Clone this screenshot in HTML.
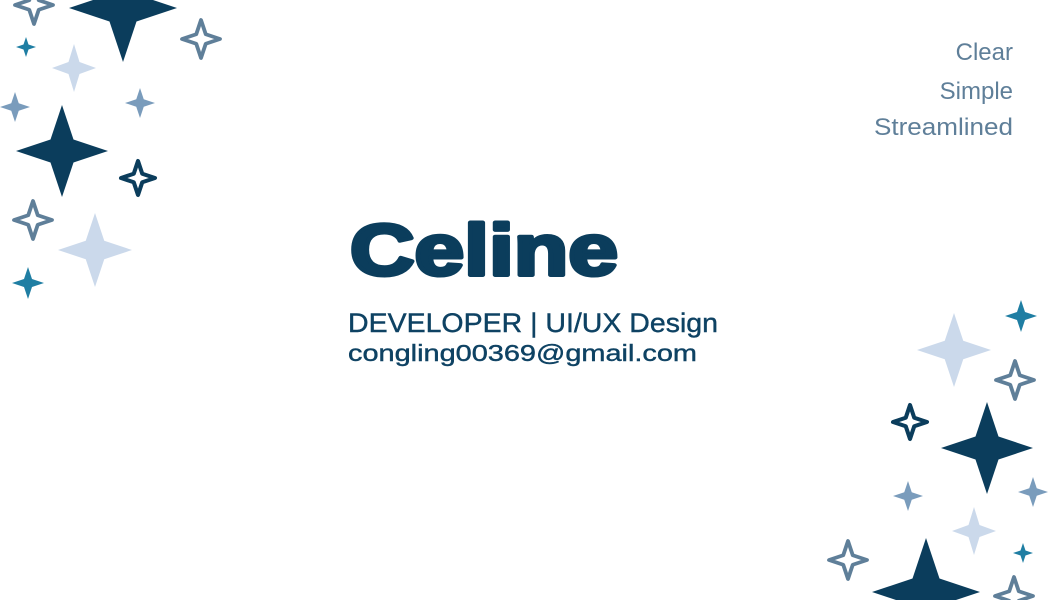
<!DOCTYPE html>
<html><head><meta charset="utf-8"><style>
html,body{margin:0;padding:0;background:#fff;width:1050px;height:600px;overflow:hidden}
svg{display:block;overflow:hidden}
</style></head><body>
<svg width="1050" height="600" viewBox="0 0 1050 600" xmlns="http://www.w3.org/2000/svg">
<defs>
<path id="s" d="M0,-1 L0.25,-0.25 L1,0 L0.25,0.25 L0,1 L-0.25,0.25 L-1,0 L-0.25,-0.25Z"/>
</defs>
<g>
<use href="#s" transform="translate(34,5) scale(19)" fill="none" stroke="#5f7f99" stroke-width="0.2" stroke-linejoin="round"/>
<use href="#s" transform="translate(123,8) scale(54)" fill="#0b3d5c"/>
<use href="#s" transform="translate(201,39) scale(19)" fill="none" stroke="#5f7f99" stroke-width="0.2" stroke-linejoin="round"/>
<use href="#s" transform="translate(26,47) scale(10)" fill="#1f7ea3"/>
<use href="#s" transform="translate(74,68) scale(22,24)" fill="#cbd9eb"/>
<use href="#s" transform="translate(15,107) scale(15)" fill="#7a9cbc"/>
<use href="#s" transform="translate(140,103) scale(15)" fill="#7a9cbc"/>
<use href="#s" transform="translate(62,151) scale(46)" fill="#0b3d5c"/>
<use href="#s" transform="translate(138,178) scale(17)" fill="none" stroke="#0b3d5c" stroke-width="0.24" stroke-linejoin="round"/>
<use href="#s" transform="translate(33,220) scale(19)" fill="none" stroke="#5f7f99" stroke-width="0.2" stroke-linejoin="round"/>
<use href="#s" transform="translate(95,250) scale(37)" fill="#cbd9eb"/>
<use href="#s" transform="translate(28,283) scale(16)" fill="#1f7ea3"/>
<use href="#s" transform="translate(1021,316) scale(16)" fill="#1f7ea3"/>
<use href="#s" transform="translate(954,350) scale(37)" fill="#cbd9eb"/>
<use href="#s" transform="translate(1015,380) scale(19)" fill="none" stroke="#5f7f99" stroke-width="0.2" stroke-linejoin="round"/>
<use href="#s" transform="translate(910,422) scale(17)" fill="none" stroke="#0b3d5c" stroke-width="0.24" stroke-linejoin="round"/>
<use href="#s" transform="translate(987,448) scale(46)" fill="#0b3d5c"/>
<use href="#s" transform="translate(908,496) scale(15)" fill="#7a9cbc"/>
<use href="#s" transform="translate(1033,492) scale(15)" fill="#7a9cbc"/>
<use href="#s" transform="translate(974,531) scale(22,24)" fill="#cbd9eb"/>
<use href="#s" transform="translate(1023,553) scale(10)" fill="#1f7ea3"/>
<use href="#s" transform="translate(848,560) scale(19)" fill="none" stroke="#5f7f99" stroke-width="0.2" stroke-linejoin="round"/>
<use href="#s" transform="translate(926,592) scale(54)" fill="#0b3d5c"/>
<use href="#s" transform="translate(1014,596) scale(19)" fill="none" stroke="#5f7f99" stroke-width="0.2" stroke-linejoin="round"/>
</g>
<g font-family="Liberation Sans, sans-serif">
<text x="350" y="275" font-size="72" font-weight="900" fill="#0b3d5c" stroke="#0b3d5c" stroke-width="4" stroke-linejoin="round" textLength="268" lengthAdjust="spacingAndGlyphs">Celine</text>
<text x="348" y="332" font-size="27" fill="#0e4263" stroke="#0e4263" stroke-width="0.4" textLength="370" lengthAdjust="spacingAndGlyphs">DEVELOPER | UI/UX Design</text>
<text x="348" y="361" font-size="23" fill="#0e4263" stroke="#0e4263" stroke-width="0.4" textLength="349" lengthAdjust="spacingAndGlyphs">congling00369@gmail.com</text>
<g font-size="24" fill="#5f7f99" text-anchor="end">
<text x="1013" y="60">Clear</text>
<text x="1013" y="99">Simple</text>
<text x="1013" y="135" textLength="139" lengthAdjust="spacingAndGlyphs">Streamlined</text>
</g>
</g>
</svg>
</body></html>
